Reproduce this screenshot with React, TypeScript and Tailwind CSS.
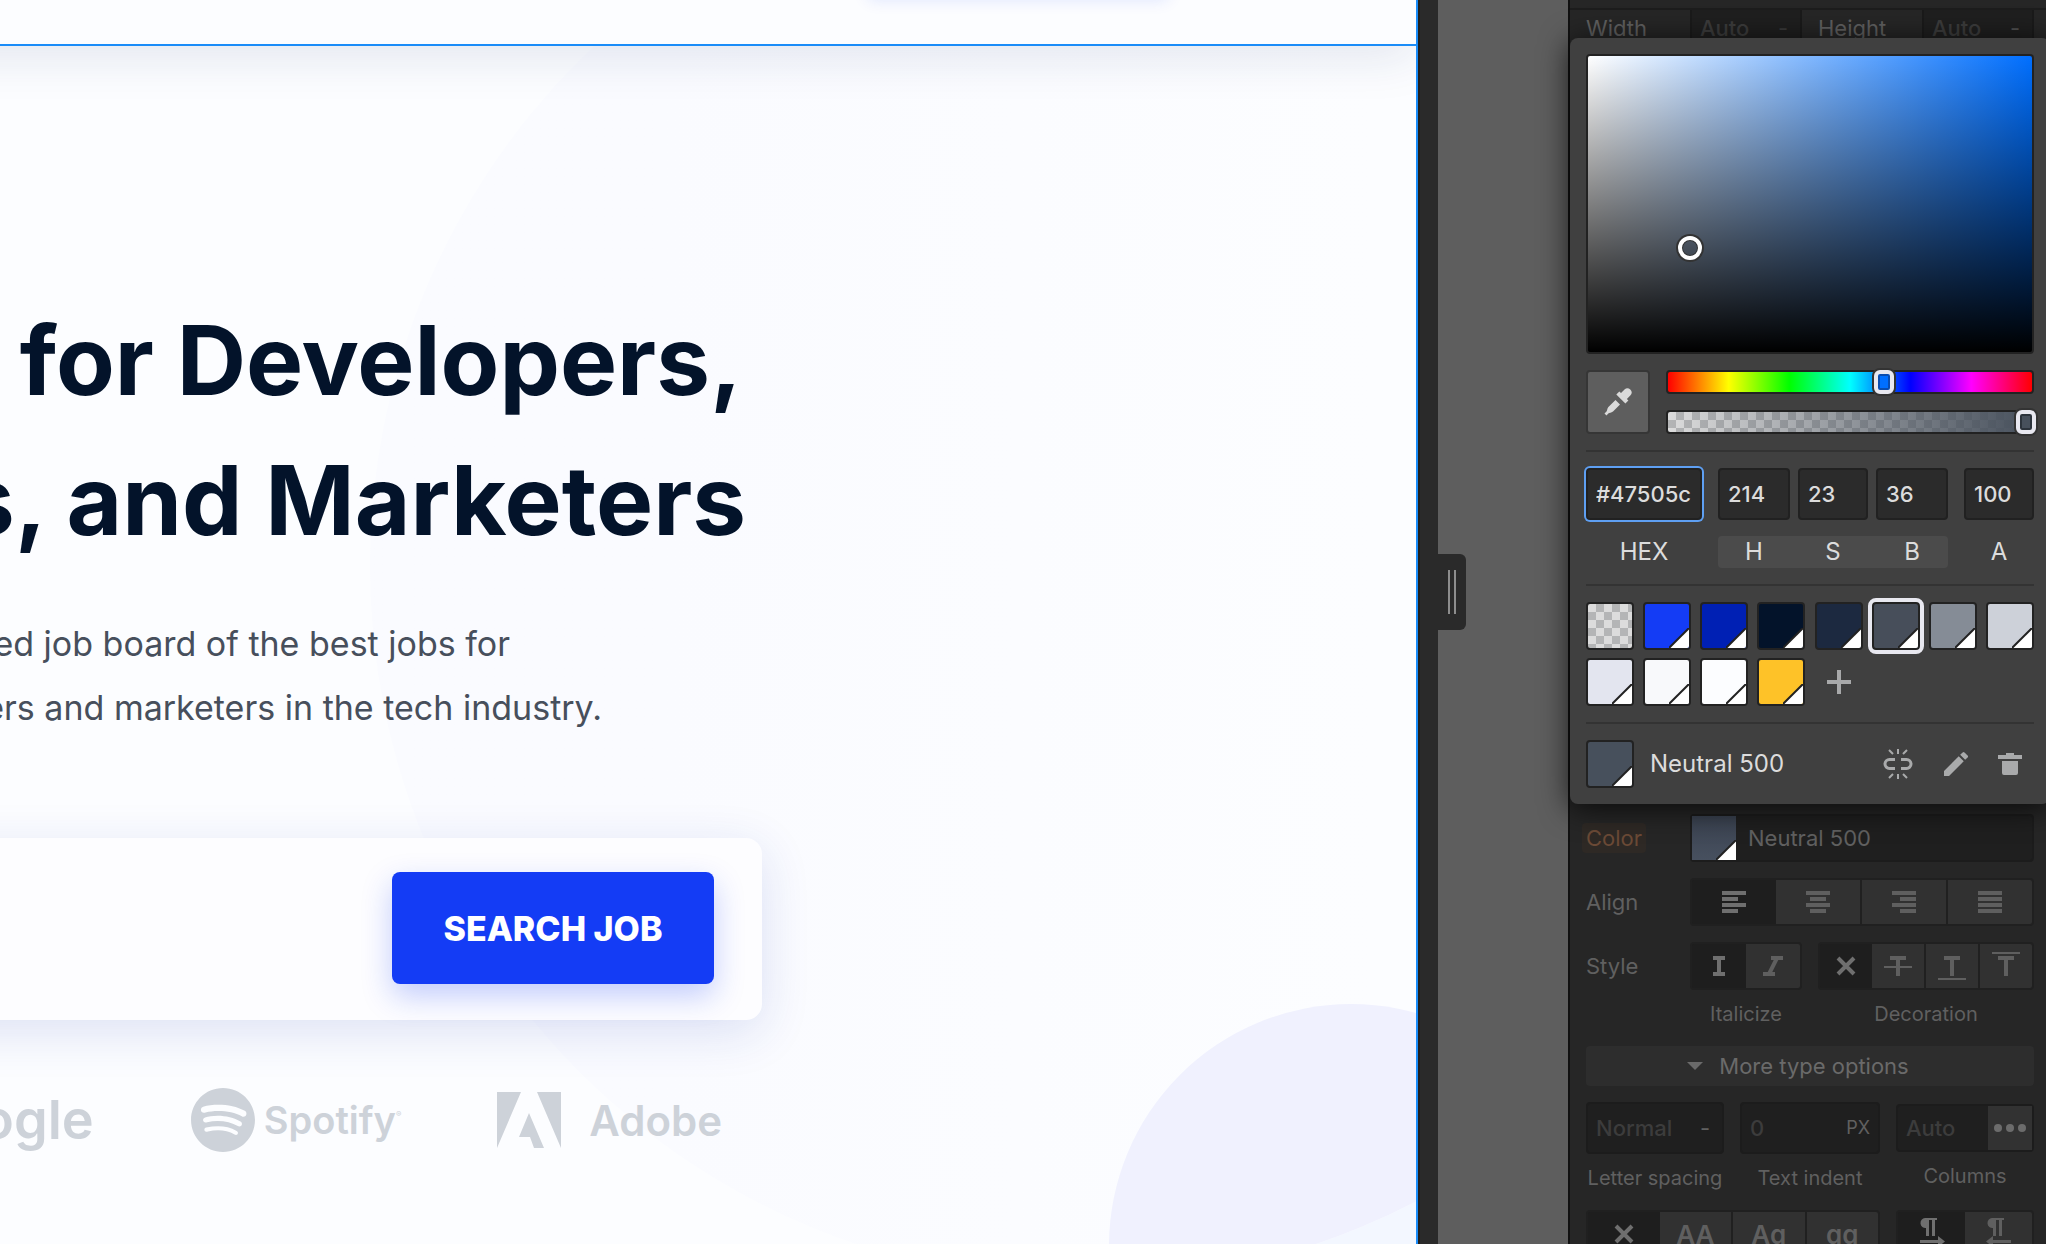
import type { ReactNode } from 'react';
import { FaSpotify } from 'react-icons/fa';
import { MdEdit } from 'react-icons/md';

const checker =
  'bg-[conic-gradient(#b4b5b6_25%,#dcdcdc_0_50%,#b4b5b6_0_75%,#dcdcdc_0)] bg-[length:16px_16px]';

function Corner() {
  return (
    <svg viewBox="0 0 20 20" className="absolute right-0 bottom-0 size-5" aria-hidden="true">
      <path d="M0 20 20 0V20Z" fill="#fff" />
      <path d="M0 20 20 0" stroke="#222" strokeWidth="2" />
    </svg>
  );
}

const swatches = [
  { name: 'Primary 500', color: 'bg-[#143cf5]' },
  { name: 'Primary 700', color: 'bg-[#0020b4]' },
  { name: 'Neutral 900', color: 'bg-[#03132a]' },
  { name: 'Neutral 700', color: 'bg-[#1c2940]' },
  { name: 'Neutral 500', color: 'bg-[#474e5a]', selected: true },
  { name: 'Neutral 400', color: 'bg-[#858c96]' },
  { name: 'Neutral 300', color: 'bg-[#cdd1d9]' },
  { name: 'Neutral 200', color: 'bg-[#e3e5ef]' },
  { name: 'Neutral 100', color: 'bg-[#f8f9fb]' },
  { name: 'White', color: 'bg-[#fcfdff]' },
  { name: 'Yellow', color: 'bg-[#fec228]' },
];

function Canvas() {
  return (
    <main className="relative min-w-0 flex-1 overflow-hidden border-r-2 border-[#1a8cf8] bg-[#fcfdff]">
      <div className="absolute top-[1004px] left-[1109px] size-[484px] rounded-full bg-[#f3f7ff]" />
      <div className="absolute -top-[150px] left-[370px] size-[1432px] overflow-hidden rounded-full bg-linear-to-r from-[#fafbff] from-20% to-[#fcfdff] to-70%">
        <div className="absolute top-[1154px] left-[739px] size-[484px] rounded-full bg-[#f0f1fe]" />
      </div>
      <header className="relative -ml-20 flex h-[46px] justify-end border-b-2 border-[#1a8cf8] bg-[#fcfdff] shadow-[0_8px_50px_rgba(20,50,110,0.13)]">
        <div className="-mt-10 mr-[248px] h-10 w-[300px] shadow-[0_0_16px_rgba(20,60,245,0.12)]" />
      </header>
      <div className="relative flex w-[762px] flex-col">
        <h1 className="mt-[244px] flex flex-col items-end pr-4 text-[96px] leading-[140px] font-bold whitespace-nowrap text-[#03132a]">
          <span className="pr-1">for Developers,</span>
          <span>s, and Marketers</span>
        </h1>
        <p className="mt-[42px] flex w-[602px] flex-col items-end text-[34px] leading-[64px] whitespace-nowrap text-[#474f5c]">
          <span className="pr-[92px]">ed job board of the best jobs for</span>
          <span>ers and marketers in the tech industry.</span>
        </p>
        <div className="mt-[98px] -ml-20 flex h-[182px] justify-end rounded-r-2xl bg-[#fdfdff] pt-[34px] pr-12 shadow-[0_12px_50px_rgba(30,60,180,0.14)]">
          <button className="h-28 w-[322px] rounded-lg bg-[#143cf5] text-[34px] font-extrabold text-white shadow-[0_12px_30px_rgba(20,60,245,0.25)]">
            SEARCH JOB
          </button>
        </div>
        <div className="mt-[60px] flex h-20 items-center justify-end pr-10 text-[#cdd2d9]">
          <span className="shrink-0 text-[54px] leading-none font-semibold">ogle</span>
          <FaSpotify className="ml-24 size-[66px] shrink-0" />
          <span className="ml-2 shrink-0 text-[38px] font-semibold">Spotify</span>
          <span className="mb-3 shrink-0 text-[8px]">®</span>
          <svg viewBox="0 0 64 56" className="ml-24 h-14 w-16 shrink-0" fill="currentColor" aria-hidden="true">
            <path d="M0 0h24L0 56ZM40 0h24v56ZM32 21 47 56H37L33 45H22Z" />
          </svg>
          <span className="ml-7 shrink-0 text-[42px] font-semibold">Adobe</span>
        </div>
      </div>
    </main>
  );
}

function Dropper() {
  return (
    <svg viewBox="0 0 28 28" className="size-7" fill="#dadada" aria-hidden="true">
      <path d="M20.5 1.6a4 4 0 0 1 5.8 5.8l-3.4 3.6 1.5 1.6-3 3L12.300 6.600l3-3 1.700 1.500ZM11.500 12l4.500 4.500-7 7c-1.800 1.500-3.500.9-4.700 2L2.500 27.500.5 25.500l2-1.900c1-1.100.4-2.800 1.900-4.500Z" />
    </svg>
  );
}

function Field({ id, value, width }: { id: string; value: string; width: string }) {
  return (
    <input
      id={id}
      defaultValue={value}
      className={`${width} h-[52px] rounded border-2 border-[#212121] bg-[#2b2b2b] pl-2 text-[22px] font-medium text-[#dcdcdc] outline-none`}
    />
  );
}

function Picker() {
  return (
    <section
      aria-label="Color picker"
      className="absolute top-[38px] left-0 z-10 flex w-[480px] flex-col rounded-lg bg-[#404040] p-4 shadow-[0_4px_30px_rgba(0,0,0,0.75)]"
    >
      <div className="relative h-[300px] rounded border-2 border-[#222] bg-[linear-gradient(to_top,#000,transparent),linear-gradient(to_right,#fff,#006fff)]">
        <span className="absolute top-[180px] left-[90px] size-[24px] rounded-full border-4 border-white shadow-[0_0_0_2px_#333,inset_0_0_0_1px_#333]" />
      </div>
      <div className="mt-4 flex gap-4">
        <button aria-label="Pick a color" className="flex size-16 items-center justify-center rounded border-2 border-[#363636] bg-[#5e5e5e]">
          <Dropper />
        </button>
        <div className="flex flex-1 flex-col gap-4">
          <div className="relative h-6 rounded border-2 border-[#222] bg-[linear-gradient(to_right,#f00,#ff0,#0f0,#0ff,#00f,#f0f,#f00)]">
            <span className="absolute -top-[2px] left-[206px] h-6 w-5 rounded-md border-4 border-[#e8e8f0] bg-[#006fff] shadow-[0_0_0_2px_#333,inset_0_0_0_2px_#0a4db0]" />
          </div>
          <div className={`relative h-6 rounded border-2 border-[#222] ${checker}`}>
            <div className="h-full bg-[linear-gradient(to_right,transparent,#47505c)]" />
            <span className="absolute -top-[2px] -right-1 h-6 w-5 rounded-md border-4 border-[#e8e8f0] bg-[#47505c] shadow-[0_0_0_2px_#333,inset_0_0_0_2px_#2c333c]" />
          </div>
        </div>
      </div>
      <div className="mt-4 flex justify-between border-t-2 border-[#333] pt-4 text-[22px] text-[#dcdcdc]">
        <div className="flex flex-col gap-4">
          <input
            id="hex"
            defaultValue="#47505c"
            className="h-[52px] w-[116px] rounded border-2 border-[#212121] bg-[#2b2b2b] pl-2 text-[22px] font-medium ring-2 ring-[#5e9ff2] outline-none"
          />
          <label htmlFor="hex" className="text-center text-2xl">HEX</label>
        </div>
        <div className="flex flex-col gap-4">
          <div className="flex gap-2">
            <Field id="hue" value="214" width="w-[72px]" />
            <Field id="sat" value="23" width="w-[70px]" />
            <Field id="bri" value="36" width="w-[72px]" />
          </div>
          <div className="flex gap-2 rounded bg-[#4b4b4b] text-center text-2xl">
            <label htmlFor="hue" className="w-[72px]">H</label>
            <label htmlFor="sat" className="w-[70px]">S</label>
            <label htmlFor="bri" className="w-[72px]">B</label>
          </div>
        </div>
        <div className="flex flex-col gap-4">
          <Field id="alpha" value="100" width="w-[70px]" />
          <label htmlFor="alpha" className="text-center text-2xl">A</label>
        </div>
      </div>
      <div className="mt-4 grid grid-cols-[repeat(8,48px)] justify-between gap-y-2 border-t-2 border-[#333] pt-4">
        <button aria-label="Transparent" className={`size-12 rounded border-2 border-[#222] ${checker}`} />
        {swatches.map((s) => (
          <button
            key={s.name}
            aria-label={s.name}
            className={`relative size-12 overflow-hidden rounded border-2 border-[#222] ${s.color} ${
              s.selected ? 'outline-4 outline-[#e8e8f0]' : ''
            }`}
          >
            <Corner />
          </button>
        ))}
        <button aria-label="Add swatch" className="flex size-12 items-center justify-center">
          <svg viewBox="0 0 24 24" className="size-6" fill="#a8a9aa" aria-hidden="true">
            <path d="M10 0h4v10h10v4H14v10h-4V14H0v-4h10Z" />
          </svg>
        </button>
      </div>
      <div className="mt-4 flex items-center border-t-2 border-[#333] pt-4">
        <span className="relative size-12 overflow-hidden rounded border-2 border-[#222] bg-[#47505c]">
          <Corner />
        </span>
        <span className="ml-4 flex-1 text-2xl text-[#dcdcdc]">Neutral 500</span>
        <div className="flex items-center gap-[26px] pr-3 text-[#a9aaab]">
          <button aria-label="Unlink swatch">
            <svg viewBox="0 0 32 32" className="size-8" fill="none" stroke="currentColor" aria-hidden="true">
              <path d="M13 11.500H7.500a4.500 4.500 0 0 0 0 9H13M19 11.500h5.500a4.500 4.500 0 0 1 0 9H19" strokeWidth="3" />
              <path d="M16 1v5M7 2l4 4M25 2l-4 4M16 26v5M7 30l4-4M25 30l-4-4" strokeWidth="2" />
            </svg>
          </button>
          <button aria-label="Edit swatch"><MdEdit className="size-8" /></button>
          <button aria-label="Delete swatch">
            <svg viewBox="0 0 24 24" className="size-6" fill="currentColor" aria-hidden="true">
              <path d="M0 3h8V1h8v2h8v4H0ZM4 9h16v12q0 2-2 2H6q-2 0-2-2Z" />
            </svg>
          </button>
        </div>
      </div>
    </section>
  );
}

function Segments({ width, items }: { width: string; items: { label: string; icon: ReactNode }[] }) {
  return (
    <div className={`${width} flex h-12 overflow-hidden rounded border-2 border-[#202020] bg-[#202020]`}>
      {items.map((item, i) => (
        <button
          key={item.label}
          aria-label={item.label}
          className={
            i === 0
              ? 'flex flex-1 items-center justify-center bg-[#1e1e1e] text-[#6f6f6f]'
              : i === 1
                ? 'flex flex-1 items-center justify-center bg-[#313131] text-[#5f5f5f]'
                : 'ml-0.5 flex flex-1 items-center justify-center bg-[#313131] text-[#5f5f5f]'
          }
        >
          {item.icon}
        </button>
      ))}
    </div>
  );
}

function Glyph({ d }: { d: string }) {
  return (
    <svg viewBox="0 0 28 28" className="size-7" fill="none" stroke="currentColor" strokeWidth="4" aria-hidden="true">
      <path d={d} />
    </svg>
  );
}

function Decorated({ line }: { line: string }) {
  return (
    <svg viewBox="0 0 28 28" className="size-7" fill="none" stroke="currentColor" aria-hidden="true">
      <path d="M6 6h16M14 6v18" strokeWidth="4" />
      <path d={line} strokeWidth="2" />
    </svg>
  );
}

function Pilcrow({ flip }: { flip?: boolean }) {
  return (
    <svg viewBox="0 0 28 32" className="size-8" fill="currentColor" aria-hidden="true">
      <path d="M7 0h12v2h-2v16h-3V2h-3v16H8V10A5 5 0 0 1 7 0Z" />
      <path d={flip ? 'M8 18v4h18v3H8v4l-7-5.500Z' : 'M20 18v4H2v3h18v4l7-5.500Z'} />
    </svg>
  );
}

const cross = 'M6 6 22 22M22 6 6 22';

const alignItems = [
  { label: 'Align left', icon: <Glyph d="M2 5h24M2 11h16M2 17h24M2 23h16" /> },
  { label: 'Align center', icon: <Glyph d="M2 5h24M6 11h16M2 17h24M6 23h16" /> },
  { label: 'Align right', icon: <Glyph d="M2 5h24M10 11h16M2 17h24M10 23h16" /> },
  { label: 'Justify', icon: <Glyph d="M2 5h24M2 11h24M2 17h24M2 23h24" /> },
];

const italicItems = [
  { label: 'Regular', icon: <Glyph d="M8 6h12M8 22h12M14 6v16" /> },
  { label: 'Italic', icon: <Glyph d="M12 6h12M4 22h12M18 6 10 22" /> },
];

const decorationItems = [
  { label: 'No decoration', icon: <Glyph d={cross} /> },
  { label: 'Strikethrough', icon: <Decorated line="M0 15h28" /> },
  { label: 'Underline', icon: <Decorated line="M0 27h28" /> },
  { label: 'Overline', icon: <Decorated line="M0 1h28" /> },
];

const caseItems = [
  { label: 'No capitalization', icon: <Glyph d={cross} /> },
  { label: 'All caps', icon: <span className="text-[26px] font-semibold">AA</span> },
  { label: 'Capitalize', icon: <span className="text-[26px] font-semibold">Aɑ</span> },
  { label: 'Lowercase', icon: <span className="text-[26px] font-semibold">ɑɑ</span> },
];

const directionItems = [
  { label: 'Left to right', icon: <Pilcrow /> },
  { label: 'Right to left', icon: <Pilcrow flip /> },
];

function StylePanel() {
  return (
    <aside className="relative w-[478px] shrink-0 border-l-2 border-[#111] bg-[#262626] text-[22px] text-[#606060]">
      <div className="mt-2 flex items-center border-t-2 border-[#1d1d1d] pr-3 pl-4">
        <label htmlFor="width" className="w-[104px]">Width</label>
        <div className="flex h-9 w-28 items-center justify-between border-x-2 border-[#1a1a1a] bg-[#1f1f1f] pr-3">
          <input id="width" placeholder="Auto" className="w-16 pl-2 font-medium placeholder:text-[#3c3c3c]" />
          <span className="text-[#3a3a3a]">-</span>
        </div>
        <label htmlFor="height" className="w-[120px] pl-4">Height</label>
        <div className="flex h-9 flex-1 items-center justify-between border-x-2 border-[#1a1a1a] bg-[#1f1f1f] pr-3">
          <input id="height" placeholder="Auto" className="w-16 pl-2 font-medium placeholder:text-[#3c3c3c]" />
          <span className="text-[#505050]">-</span>
        </div>
      </div>
      <Picker />
      <div className="mt-[768px] flex flex-col pr-3 pl-4">
        <div className="flex items-center">
          <div className="w-[104px]">
            <span className="-ml-1 rounded bg-[#2e2925] px-1 py-0.5 text-[#6b4a36]">Color</span>
          </div>
          <button className="flex h-12 flex-1 items-center rounded border-2 border-[#1c1c1c] bg-[#1f1f1f]">
            <span className="relative size-11 bg-linear-to-b from-[#3a4250] to-[#47505f]">
              <Corner />
            </span>
            <span className="ml-3">Neutral 500</span>
          </button>
        </div>
        <div className="mt-4 flex items-center">
          <span className="w-[104px]">Align</span>
          <Segments width="flex-1" items={alignItems} />
        </div>
        <div className="mt-4 flex items-center">
          <span className="w-[104px]">Style</span>
          <Segments width="w-28" items={italicItems} />
          <div className="w-4" />
          <Segments width="flex-1" items={decorationItems} />
        </div>
        <div className="mt-2 flex pl-[104px] text-center text-xl leading-8">
          <span className="w-28">Italicize</span>
          <span className="ml-4 flex-1">Decoration</span>
        </div>
        <button className="mt-4 flex h-10 items-center justify-center gap-4 rounded bg-[#2d2d2d] pr-6 text-[#6a6a6a]">
          <svg viewBox="0 0 16 8" className="h-2 w-4" fill="currentColor" aria-hidden="true">
            <path d="M0 0h16L8 8Z" />
          </svg>
          More type options
        </button>
        <div className="mt-4 grid grid-cols-[138px_140px_1fr] gap-x-4">
          <div className="flex flex-col">
            <div className="flex h-[52px] items-center justify-between rounded border-2 border-[#1c1c1c] bg-[#1f1f1f] pr-3">
              <input id="spacing" placeholder="Normal" className="w-24 pl-2 font-medium placeholder:text-[#3c3c3c]" />
              <span>-</span>
            </div>
            <label htmlFor="spacing" className="mt-2 text-center text-xl leading-8 whitespace-nowrap">Letter spacing</label>
          </div>
          <div className="flex flex-col">
            <div className="flex h-[52px] items-center justify-between rounded border-2 border-[#1c1c1c] bg-[#1f1f1f] pr-2">
              <input id="indent" placeholder="0" className="w-20 pl-2 font-medium placeholder:text-[#3c3c3c]" />
              <span className="text-lg">PX</span>
            </div>
            <label htmlFor="indent" className="mt-2 text-center text-xl leading-8">Text indent</label>
          </div>
          <div className="flex flex-col pt-0.5">
            <div className="flex h-12 items-center justify-between rounded border-2 border-[#1c1c1c] bg-[#1f1f1f]">
              <input id="columns" placeholder="Auto" className="w-20 pl-2 font-medium placeholder:text-[#3c3c3c]" />
              <button aria-label="More column options" className="flex size-11 items-center justify-center gap-1 bg-[#323232]">
                <span className="size-2 rounded-full bg-[#6c6c6c]" />
                <span className="size-2 rounded-full bg-[#6c6c6c]" />
                <span className="size-2 rounded-full bg-[#6c6c6c]" />
              </button>
            </div>
            <label htmlFor="columns" className="mt-2 text-center text-xl leading-8">Columns</label>
          </div>
        </div>
        <div className="mt-4 flex gap-4">
          <Segments width="w-[294px]" items={caseItems} />
          <Segments width="flex-1" items={directionItems} />
        </div>
      </div>
    </aside>
  );
}

export default function App() {
  return (
    <div className="flex h-screen overflow-hidden bg-[#5e5e5e] font-['Inter',sans-serif]">
      <Canvas />
      <div className="w-5 shrink-0 border-l-2 border-[#1f1f1f] bg-[#2a2a2a]" />
      <div className="flex w-[130px] shrink-0 items-start">
        <button aria-label="Resize canvas" className="mt-[554px] flex h-[76px] w-7 items-center justify-center gap-1 rounded-r-md bg-[#2a2a2a]">
          <span className="h-11 w-0.5 bg-[#8d8d8d]" />
          <span className="h-11 w-0.5 bg-[#8d8d8d]" />
        </button>
      </div>
      <StylePanel />
    </div>
  );
}
